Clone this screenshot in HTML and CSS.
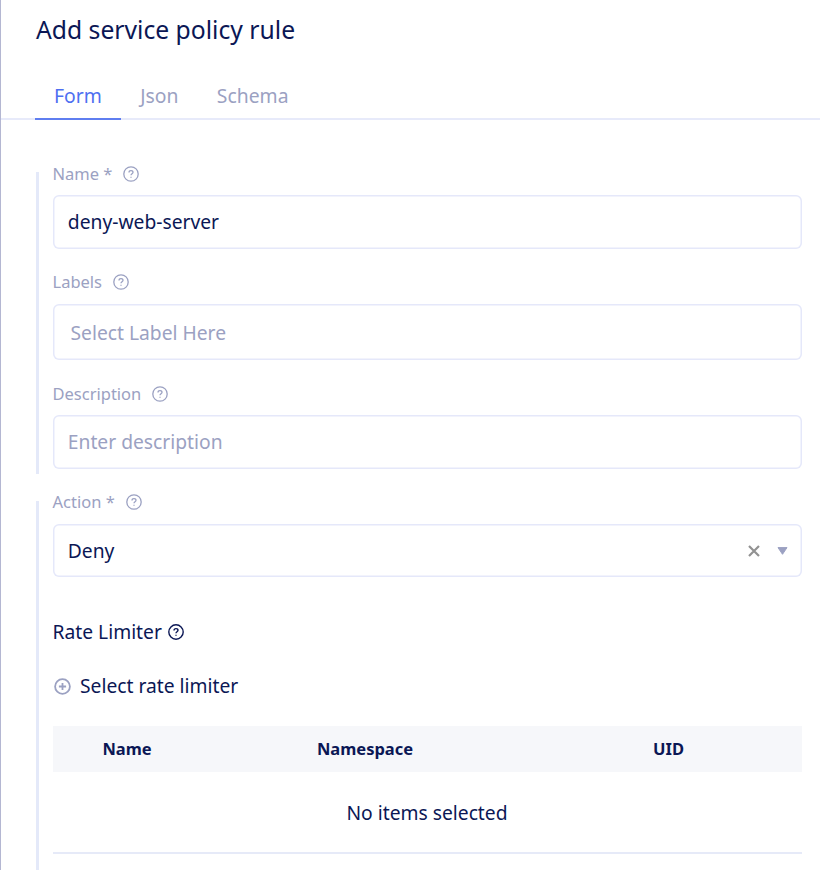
FILE: index.html
```html
<!DOCTYPE html>
<html lang="en">
<head>
<meta charset="utf-8">
<title>Add service policy rule</title>
<link rel="stylesheet" href="styles.css">
</head>
<body>
<svg class="defs" width="0" height="0">
  <symbol id="help" viewBox="0 0 16 16">
    <circle cx="8" cy="8" r="7.2"/>
    <path d="M6 6.4C6 5.2 6.9 4.6 8 4.6s2 .7 2 1.7c0 1.4-2 1.4-2 2.9"/>
    <path d="M8 10.7v1.1"/>
  </symbol>
</svg>
<main class="panel">
  <h1 class="title"><span>Add service policy rule</span></h1>
  <nav class="tabs">
    <a class="tab active">Form</a>
    <a class="tab json">Json</a>
    <a class="tab schema">Schema</a>
  </nav>
  <section class="section meta">
    <div class="bar"></div>
    <div class="fields">
      <div class="field">
        <label class="label">Name * <svg class="help"><use href="#help"/></svg></label>
        <div class="input">deny-web-server</div>
      </div>
      <div class="field labels">
        <label class="label">Labels <svg class="help"><use href="#help"/></svg></label>
        <div class="input placeholder">Select Label Here</div>
      </div>
      <div class="field">
        <label class="label">Description <svg class="help"><use href="#help"/></svg></label>
        <div class="input placeholder">Enter description</div>
      </div>
    </div>
  </section>
  <section class="section rule">
    <div class="bar"></div>
    <div class="fields">
      <div class="field action">
        <label class="label">Action * <svg class="help"><use href="#help"/></svg></label>
        <div class="input">Deny
          <span class="controls">
            <svg class="clear" viewBox="0 0 12 12"><path d="M1 1l10 10M11 1L1 11"/></svg>
            <svg class="caret" viewBox="0 0 11 9"><path d="M1 1.6h9L5.5 8.3z"/></svg>
          </span>
        </div>
      </div>
      <h2 class="subtitle">Rate Limiter <svg class="help"><use href="#help"/></svg></h2>
      <div class="select">
        <svg class="plus" viewBox="0 0 17 17"><circle cx="8.5" cy="8.5" r="7.4"/><path d="M8.5 4.9v7.2M4.9 8.5h7.2"/></svg>
        <span>Select rate limiter</span>
      </div>
      <div class="table">
        <div class="head"><span>Name</span><span>Namespace</span><span class="uid">UID</span></div>
        <div class="empty">No items selected</div>
      </div>
    </div>
  </section>
</main>
</body>
</html>
```
FILE: styles.css
```css
* { box-sizing: border-box; }
body {
  margin: 0;
  background: #fff;
  color: #0b1755;
  font: 19.25px/28px "Noto Sans", sans-serif;
}
svg { fill: none; stroke: currentColor; flex: none; }
.defs { position: absolute; }
.panel {
  height: 870px;
  overflow: hidden;
  border-left: 1px solid #b4b7d2;
}
.title {
  height: 72px;
  margin: 0;
  padding: 12px 0 0 35px;
  font-size: 24.7px;
  font-weight: 400;
  line-height: 36px;
}
.tabs {
  display: flex;
  height: 48px;
  padding-left: 34px;
  border-bottom: 2px solid #e7eafa;
  color: #9ba1c2;
  font-size: 19.35px;
}
.tab { height: 48px; padding: 10px 19.4px 0 19px; }
.active { color: #4e6ff1; border-bottom: 2px solid #5f7ef0; }
.section { display: flex; padding: 0 18.5px 0 35px; }
.bar { flex: none; width: 3px; margin-right: 13.5px; background: #e4e9f9; }
.fields { flex: 1; min-width: 0; }
.meta { height: 312px; margin-top: 42px; }
.meta .bar { margin-top: 10px; }
.rule { height: 396px; margin-top: 16px; }
.rule .bar { margin-top: 11px; }
.field { margin-bottom: 21px; }
.label {
  display: flex;
  align-items: center;
  height: 24px;
  margin-bottom: 9px;
  color: #9ba1c2;
  font-size: 16.5px;
}
.help { width: 16px; height: 16px; margin-left: 11px; stroke-width: 1.3; }
.input {
  display: flex;
  align-items: center;
  height: 54px;
  padding: 0 14px 0 15.3px;
  box-shadow: inset 0 0 0 1.5px #e5e8fa;
  border-radius: 6px;
}
.placeholder { color: #9ba1c2; }
.labels .label { margin-bottom: 10px; }
.labels .input { height: 56px; padding: 2px 0 0 18px; }
.labels { margin-bottom: 22px; }
.action .label { margin-bottom: 10px; }
.action .input { height: 53px; }
.controls { display: flex; align-items: center; margin-left: auto; gap: 17px; }
.clear { width: 12px; height: 12px; color: #929292; stroke-width: 2.2; }
.caret { width: 11px; height: 9px; color: #9ba1c2; fill: currentColor; stroke-linejoin: round; }
.subtitle {
  display: flex;
  align-items: center;
  height: 28px;
  margin: 41px 0 26px;
  font-size: 19.25px;
  font-weight: 400;
}
.subtitle .help { margin-left: 6.5px; stroke-width: 1.4; }
.select { display: flex; align-items: center; height: 28px; gap: 9.5px; padding-left: 1px; }
.plus { width: 17px; height: 17px; color: #9ba1c2; stroke-width: 1.8; }
.table { margin-top: 26px; border-bottom: 2px solid #e6eaf8; }
.head {
  display: grid;
  grid-template-columns: 149px 327px 1fr;
  align-items: center;
  height: 46px;
  background: #f6f7fa;
  font-size: 16.5px;
  font-weight: 700;
  text-align: center;
}
.uid { padding-left: 7px; }
.empty { height: 80px; padding-top: 27px; text-align: center; }
```
